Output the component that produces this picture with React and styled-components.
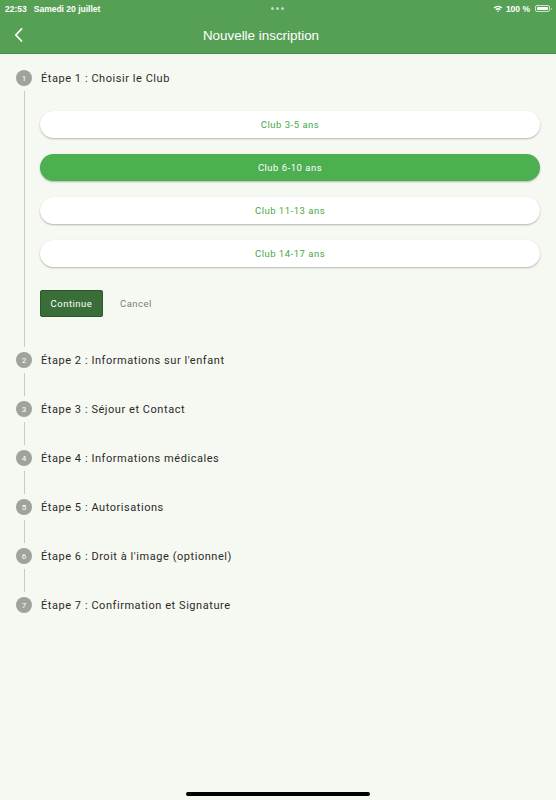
import React, { useState } from 'react';
import styled, { createGlobalStyle } from 'styled-components';

const GlobalStyle = createGlobalStyle`
    html, body {
        margin: 0;
        padding: 0;
        background: #f6f9f1;
    }
    * {
        box-sizing: border-box;
    }
`;

const clubs = ['Club 3-5 ans', 'Club 6-10 ans', 'Club 11-13 ans', 'Club 14-17 ans'];

const etapes = [
    'Étape 1 : Choisir le Club',
    "Étape 2 : Informations sur l'enfant",
    'Étape 3 : Séjour et Contact',
    'Étape 4 : Informations médicales',
    'Étape 5 : Autorisations',
    "Étape 6 : Droit à l'image (optionnel)",
    'Étape 7 : Confirmation et Signature',
];

export default function App() {
    const [club, setClub] = useState(1);
    const etapeActive = 0;

    return (
        <Screen>
            <GlobalStyle />
            <Header>
                <StatusBar>
                    <StatusLeft>
                        <span>22:53</span>
                        <span>Samedi 20 juillet</span>
                    </StatusLeft>
                    <Dots>
                        <Dot />
                        <Dot />
                        <Dot />
                    </Dots>
                    <StatusRight>
                        <svg width="10" height="8" viewBox="0 0 10 8">
                            <path d="M0.6 2.6 A6.4 6.4 0 0 1 9.4 2.6 L8.4 3.6 A5 5 0 0 0 1.6 3.6 Z" fill="#fff" />
                            <path d="M2.3 4.3 A4 4 0 0 1 7.7 4.3 L6.7 5.3 A2.6 2.6 0 0 0 3.3 5.3 Z" fill="#fff" />
                            <path d="M4 6 A1.4 1.4 0 0 1 6 6 L5 7.2 Z" fill="#fff" />
                        </svg>
                        <span>100 %</span>
                        <Battery>
                            <BatteryFill />
                        </Battery>
                    </StatusRight>
                </StatusBar>
                <NavBar>
                    <BackButton aria-label="Retour">
                        <svg width="9" height="14" viewBox="0 0 9 14">
                            <path d="M7.5 1 L1.8 7 L7.5 13" stroke="#fff" strokeWidth="1.8" fill="none" strokeLinecap="round" strokeLinejoin="round" />
                        </svg>
                    </BackButton>
                    <Title>Nouvelle inscription</Title>
                    <span />
                </NavBar>
            </Header>

            <Stepper>
                {etapes.map((label, i) => (
                    <Step key={label}>
                        <StepHeader>
                            <Circle>{i + 1}</Circle>
                            <StepLabel>{label}</StepLabel>
                        </StepHeader>
                        {i === etapeActive ? (
                            <StepBody>
                                <ClubList>
                                    {clubs.map((c, j) => (
                                        <ClubButton key={c} selected={j === club} onClick={() => setClub(j)}>
                                            {c}
                                        </ClubButton>
                                    ))}
                                </ClubList>
                                <Actions>
                                    <ContinueButton>Continue</ContinueButton>
                                    <CancelButton>Cancel</CancelButton>
                                </Actions>
                            </StepBody>
                        ) : (
                            i < etapes.length - 1 && <Connector />
                        )}
                    </Step>
                ))}
            </Stepper>

            <HomeArea>
                <HomeIndicator />
            </HomeArea>
        </Screen>
    );
}

const Screen = styled.div`
    min-height: 100vh;
    display: flex;
    flex-direction: column;
    background: #f6f9f1;
    font-family: Roboto, 'Liberation Sans', sans-serif;
`;

const Header = styled.header`
    background: #56a056;
    border-bottom: 1px solid #43913f;
    color: #fff;
`;

const StatusBar = styled.div`
    height: 17px;
    padding: 0 6px 0 5px;
    display: grid;
    grid-template-columns: 1fr auto 1fr;
    align-items: center;
    font-family: 'Liberation Sans', Arial, sans-serif;
    font-size: 8.5px;
    font-weight: 700;
`;

const StatusLeft = styled.div`
    display: flex;
    gap: 7px;
`;

const Dots = styled.div`
    display: flex;
    gap: 2px;
`;

const Dot = styled.span`
    width: 3px;
    height: 3px;
    border-radius: 50%;
    background: rgba(255, 255, 255, 0.6);
`;

const StatusRight = styled.div`
    display: flex;
    justify-content: flex-end;
    align-items: center;
    gap: 3px;
`;

const Battery = styled.span`
    position: relative;
    width: 15px;
    height: 7px;
    border: 1px solid rgba(255, 255, 255, 0.7);
    border-radius: 2px;
    padding: 1px;
    display: flex;
    margin-left: 2px;

    &::after {
        content: '';
        position: absolute;
        right: -3px;
        top: 1.5px;
        width: 1.5px;
        height: 2.5px;
        border-radius: 0 1px 1px 0;
        background: rgba(255, 255, 255, 0.6);
    }
`;

const BatteryFill = styled.span`
    flex: 1;
    background: #fff;
    border-radius: 1px;
`;

const NavBar = styled.div`
    height: 36px;
    display: grid;
    grid-template-columns: 40px 1fr 74px;
    align-items: center;
`;

const BackButton = styled.button`
    background: none;
    border: none;
    padding: 0 0 0 14px;
    height: 100%;
    display: flex;
    align-items: center;
    cursor: pointer;
`;

const Title = styled.h1`
    margin: 0;
    text-align: center;
    font-family: 'Liberation Sans', Arial, sans-serif;
    font-size: 13.4px;
    font-weight: 400;
    color: #fff;
`;

const Stepper = styled.div`
    padding: 16px 16px 0;
    flex: 1;
`;

const Step = styled.div`
    display: flex;
    flex-direction: column;
`;

const StepHeader = styled.div`
    display: flex;
    align-items: center;
    gap: 9px;
    height: 16px;
`;

const Circle = styled.span`
    width: 16px;
    height: 16px;
    border-radius: 50%;
    background: #9fa39b;
    color: #fff;
    font-size: 8px;
    display: flex;
    align-items: center;
    justify-content: center;
    flex-shrink: 0;
`;

const StepLabel = styled.span`
    font-size: 11px;
    letter-spacing: 0.55px;
    color: #2a2a2a;
`;

const StepBody = styled.div`
    margin: 5px 0 5px 8px;
    border-left: 1px solid #c9c9c9;
    padding: 20px 0 30px 15px;
`;

const Connector = styled.div`
    margin: 5px 0 5px 8px;
    height: 23px;
    border-left: 1px solid #c9c9c9;
`;

const ClubList = styled.div`
    display: flex;
    flex-direction: column;
    gap: 16px;
`;

const ClubButton = styled.button`
    height: 27px;
    border: none;
    border-radius: 14px;
    background: ${({ selected }) => (selected ? '#4caf50' : '#fff')};
    color: ${({ selected }) => (selected ? '#fff' : '#45a845')};
    box-shadow: 0 1px 2px rgba(0, 0, 0, 0.28);
    font-family: Roboto, sans-serif;
    font-size: 9.5px;
    letter-spacing: 0.5px;
    cursor: pointer;
`;

const Actions = styled.div`
    display: flex;
    align-items: center;
    gap: 17px;
    margin-top: 23px;
`;

const ContinueButton = styled.button`
    width: 63px;
    height: 27px;
    background: #3a6e39;
    border: 1px solid #2a5a29;
    border-radius: 2px;
    color: #fff;
    font-family: Roboto, sans-serif;
    font-size: 9.5px;
    font-weight: 400;
    letter-spacing: 0.5px;
    cursor: pointer;
`;

const CancelButton = styled.button`
    background: none;
    border: none;
    padding: 0;
    color: #7d7d7d;
    font-family: Roboto, sans-serif;
    font-size: 9.5px;
    letter-spacing: 0.5px;
    cursor: pointer;
`;

const HomeArea = styled.div`
    display: flex;
    justify-content: center;
    padding-bottom: 4px;
`;

const HomeIndicator = styled.span`
    width: 184px;
    height: 4px;
    border-radius: 2px;
    background: #000;
`;
